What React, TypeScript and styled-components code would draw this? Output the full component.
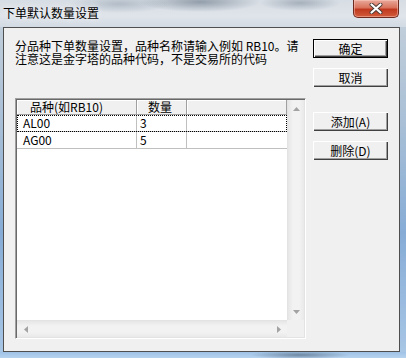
import styled, { createGlobalStyle } from 'styled-components';

const GlobalStyle = createGlobalStyle`
  html, body {
    margin: 0;
    padding: 0;
  }
  body {
    width: 406px;
    height: 358px;
    overflow: hidden;
    font-family: "SimSun", "Noto Sans CJK SC", sans-serif;
  }
`;

const Frame = styled.div`
  width: 406px;
  height: 358px;
  display: flex;
  flex-direction: column;
  background: linear-gradient(to bottom, #c7d1db 0%, #a8bfd6 35%, #86acd6 65%, #a9c7e6 100%);
`;

const TitleBar = styled.div`
  height: 27px;
  display: flex;
  align-items: flex-start;
  background:
    radial-gradient(ellipse 60px 10px at 200px 2px, rgba(60, 80, 100, 0.45), transparent),
    radial-gradient(ellipse 40px 8px at 300px 3px, rgba(70, 90, 110, 0.35), transparent),
    radial-gradient(ellipse 50px 9px at 120px 4px, rgba(90, 110, 130, 0.3), transparent),
    linear-gradient(to bottom, #d7dde4, #dfe4ea 60%, #d2dae3);
`;

const Title = styled.div`
  padding: 6px 0 0 3px;
  font-family: "Microsoft YaHei", "Noto Sans CJK SC", sans-serif;
  font-size: 12px;
  line-height: 14px;
  color: #000;
  text-shadow: 0 0 6px rgba(255, 255, 255, 0.9);
`;

const CloseButton = styled.div`
  margin-left: auto;
  margin-right: 7px;
  width: 46px;
  height: 18px;
  box-sizing: border-box;
  border: 1px solid #6e2a1f;
  border-top: none;
  border-radius: 0 0 5px 5px;
  background: linear-gradient(to bottom, #e9a99b 0%, #d9725c 45%, #c0391f 55%, #d25c3c 100%);
  box-shadow: inset 0 0 0 1px rgba(255, 210, 200, 0.45);
  display: flex;
  align-items: center;
  justify-content: center;
`;

const Middle = styled.div`
  flex: 1;
  display: flex;
`;

const Edge = styled.div<{ $w: number }>`
  width: ${(p) => p.$w}px;
`;

const BottomEdge = styled.div`
  height: 6px;
  background:
    radial-gradient(ellipse 50px 4px at 300px 3px, rgba(50, 70, 90, 0.5), transparent),
    linear-gradient(to bottom, #9fc2e6, #b7d3ef);
`;

const Client = styled.div`
  width: 397px;
  box-sizing: border-box;
  border: 1px solid #4f4f4f;
  background: #f0f0f0;
  display: flex;
  gap: 7px;
  padding: 11px 11px 12px 11px;
`;

const LeftPane = styled.div`
  width: 291px;
  display: flex;
  flex-direction: column;
`;

const Description = styled.p`
  margin: 0;
  height: 59px;
  box-sizing: border-box;
  font-size: 12px;
  line-height: 13px;
  color: #000;
`;

const ListBox = styled.div`
  height: 241px;
  box-sizing: border-box;
  border-style: solid;
  border-width: 1px;
  border-color: #a0a0a0 #ffffff #ffffff #a0a0a0;
  box-shadow: inset 1px 1px 0 #696969, inset -1px -1px 0 #e3e3e3;
  padding: 1px;
  display: grid;
  grid-template-columns: 1fr 17px;
  grid-template-rows: 1fr 17px;
  background: #fff;
`;

const Content = styled.div`
  background: #fff;
  overflow: hidden;
`;

const HeaderRow = styled.div`
  display: flex;
  height: 15px;
`;

const HeaderCell = styled.div<{ $w: number; $pad: number }>`
  width: ${(p) => p.$w}px;
  box-sizing: border-box;
  padding-left: ${(p) => p.$pad}px;
  background: #f0f0f0;
  border-right: 1px solid #a0a0a0;
  border-bottom: 1px solid #a0a0a0;
  box-shadow: inset 1px 1px 0 #ffffff;
  font-size: 12px;
  line-height: 14px;
  white-space: nowrap;
`;

const Row = styled.div<{ $focus?: boolean }>`
  display: flex;
  height: 17px;
  outline: ${(p) => (p.$focus ? '1px dotted #000' : 'none')};
  outline-offset: -1px;
`;

const Cell = styled.div<{ $w: number; $pad: number; $last?: boolean }>`
  width: ${(p) => p.$w}px;
  box-sizing: border-box;
  padding-left: ${(p) => p.$pad}px;
  border-bottom: 1px solid #c0c0c0;
  border-right: ${(p) => (p.$last ? 'none' : '1px solid #c0c0c0')};
  font-size: 12px;
  line-height: 16px;
  color: #000;
`;

const VScroll = styled.div`
  grid-row: 1;
  grid-column: 2;
  display: flex;
  flex-direction: column;
  justify-content: space-between;
  background: linear-gradient(to right, #e6e6e6, #f2f2f2 30%, #f2f2f2 70%, #e9e9e9);
  border-left: 1px solid #e3e3e3;
  box-sizing: border-box;
`;

const HScroll = styled.div`
  grid-row: 2;
  grid-column: 1;
  display: flex;
  justify-content: space-between;
  background: linear-gradient(to bottom, #e6e6e6, #f2f2f2 30%, #f2f2f2 70%, #e9e9e9);
  border-top: 1px solid #e3e3e3;
  box-sizing: border-box;
`;

const Corner = styled.div`
  grid-row: 2;
  grid-column: 2;
  background: #f0f0f0;
`;

const ArrowBox = styled.div`
  width: 17px;
  height: 17px;
  display: flex;
  align-items: center;
  justify-content: center;
  flex-shrink: 0;
`;

const RightPane = styled.div`
  width: 75px;
  display: flex;
  flex-direction: column;
`;

const Button = styled.button<{ $top: number; $default?: boolean }>`
  margin-top: ${(p) => p.$top}px;
  height: 19px;
  width: 75px;
  padding: 0;
  background: #f0f0f0;
  font-family: "SimSun", "Noto Sans CJK SC", sans-serif;
  font-size: 12px;
  line-height: 12px;
  color: #000;
  box-sizing: border-box;
  border: ${(p) => (p.$default ? '1px solid #000' : 'none')};
  box-shadow: inset 1px 1px 0 #fff, inset -1px -1px 0 #404040, inset -2px -2px 0 #a0a0a0;
`;

const Arrow = ({ dir }: { dir: 'up' | 'down' | 'left' | 'right' }) => {
  const pts = {
    up: '0,4 7,4 3.5,0',
    down: '0,0 7,0 3.5,4',
    left: '4,0 4,7 0,3.5',
    right: '0,0 0,7 4,3.5',
  }[dir];
  const vertical = dir === 'up' || dir === 'down';
  return (
    <svg width={vertical ? 7 : 4} height={vertical ? 4 : 7} viewBox={vertical ? '0 0 7 4' : '0 0 4 7'}>
      <polygon points={pts} fill="#a3a3a3" />
    </svg>
  );
};

const rows = [
  { code: 'AL00', qty: '3' },
  { code: 'AG00', qty: '5' },
];

export default function App() {
  return (
    <>
      <GlobalStyle />
      <Frame>
        <TitleBar>
          <Title>下单默认数量设置</Title>
          <CloseButton>
            <svg width="14" height="11" viewBox="0 0 14 11">
              <path d="M2.5 1.5 L11.5 9.5 M11.5 1.5 L2.5 9.5" stroke="#4a3a36" strokeWidth="4" strokeLinecap="round" />
              <path d="M2.5 1.5 L11.5 9.5 M11.5 1.5 L2.5 9.5" stroke="#ffffff" strokeWidth="2.2" strokeLinecap="round" />
            </svg>
          </CloseButton>
        </TitleBar>
        <Middle>
          <Edge $w={3} />
          <Client>
            <LeftPane>
              <Description>
                分品种下单数量设置，品种名称请输入例如 RB10。请
                <br />
                注意这是金字塔的品种代码，不是交易所的代码
              </Description>
              <ListBox>
                <Content>
                  <HeaderRow>
                    <HeaderCell $w={120} $pad={13}>品种(如RB10)</HeaderCell>
                    <HeaderCell $w={50} $pad={11}>数量</HeaderCell>
                    <HeaderCell $w={100} $pad={0} />
                  </HeaderRow>
                  {rows.map((r, i) => (
                    <Row key={r.code} $focus={i === 0}>
                      <Cell $w={120} $pad={6}>{r.code}</Cell>
                      <Cell $w={50} $pad={3}>{r.qty}</Cell>
                      <Cell $w={100} $pad={0} $last />
                    </Row>
                  ))}
                </Content>
                <VScroll>
                  <ArrowBox><Arrow dir="up" /></ArrowBox>
                  <ArrowBox><Arrow dir="down" /></ArrowBox>
                </VScroll>
                <HScroll>
                  <ArrowBox><Arrow dir="left" /></ArrowBox>
                  <ArrowBox><Arrow dir="right" /></ArrowBox>
                </HScroll>
                <Corner />
              </ListBox>
            </LeftPane>
            <RightPane>
              <Button $top={0} $default>确定</Button>
              <Button $top={10}>取消</Button>
              <Button $top={25}>添加(A)</Button>
              <Button $top={10}>删除(D)</Button>
            </RightPane>
          </Client>
          <Edge $w={6} />
        </Middle>
        <BottomEdge />
      </Frame>
    </>
  );
}
